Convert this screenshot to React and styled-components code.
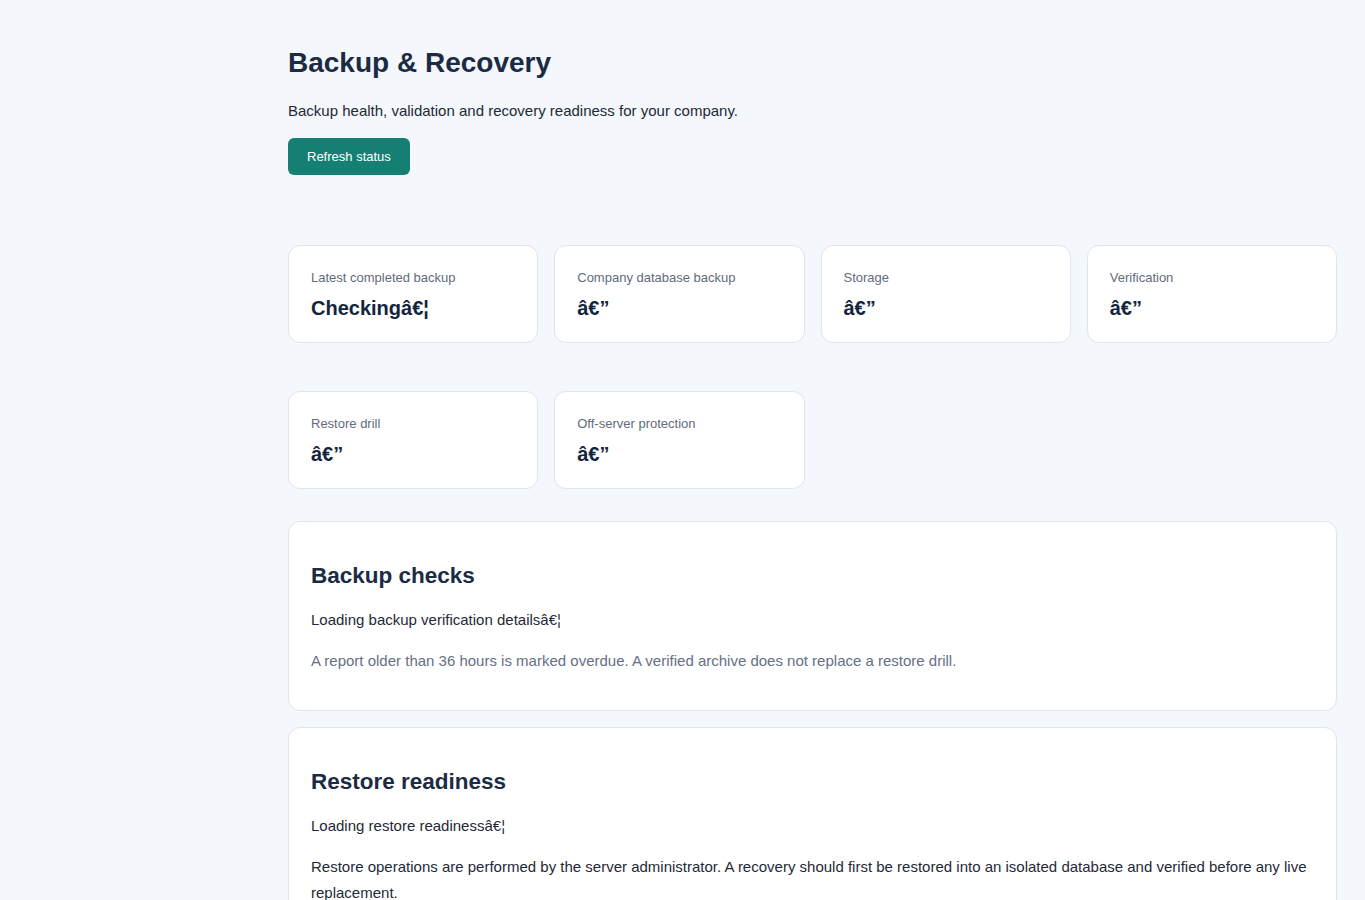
import React from 'react';
import styled, { createGlobalStyle } from 'styled-components';

const GlobalStyle = createGlobalStyle`
  * { box-sizing: border-box; }
  body {
    margin: 0;
    background: #f4f7fb;
    font-family: "Liberation Sans", Arial, sans-serif;
    color: #1f2937;
  }
`;

const Page = styled.div`
  min-height: 100vh;
  padding: 46px 28px 40px 288px;
`;

const Title = styled.h1`
  margin: 0;
  font-size: 28px;
  line-height: 1.2;
  font-weight: 700;
  color: #1b2b43;
`;

const Subtitle = styled.p`
  margin: 18px 0 14px;
  font-size: 15px;
  line-height: 26px;
  color: #1f2937;
`;

const PrimaryButton = styled.button`
  height: 37px;
  padding: 0 19px;
  border: none;
  border-radius: 6px;
  background: #167f74;
  color: #ffffff;
  font-family: inherit;
  font-size: 13px;
  font-weight: 500;
  cursor: pointer;
`;

const StatGrid = styled.div`
  display: grid;
  grid-template-columns: repeat(4, 1fr);
  column-gap: 16px;
  row-gap: 48px;
  margin: 70px 0 32px;
`;

const StatCard = styled.div`
  background: #ffffff;
  border: 1px solid #dfe5ee;
  border-radius: 12px;
  padding: 23px 22px 22px;
`;

const StatLabel = styled.div`
  font-size: 13px;
  line-height: 18px;
  color: #5f6b7c;
  margin-bottom: 9px;
`;

const StatValue = styled.div`
  font-size: 20px;
  line-height: 24px;
  font-weight: 700;
  color: #13253d;
`;

const Sections = styled.div`
  display: flex;
  flex-direction: column;
  gap: 16px;
`;

const Panel = styled.section`
  background: #ffffff;
  border: 1px solid #dfe5ee;
  border-radius: 12px;
  padding: 41px 22px 36px;
`;

const PanelTitle = styled.h2`
  margin: 0 0 18px;
  font-size: 22.5px;
  line-height: 26px;
  font-weight: 700;
  color: #1b2b43;
`;

const PanelText = styled.p`
  margin: 0 0 15px;
  font-size: 15px;
  line-height: 26px;
  color: ${props => (props.muted ? '#667085' : '#1f2937')};

  &:last-child {
    margin-bottom: 0;
  }
`;

const ELLIPSIS = 'â\u20ac\u00a6';
const DASH = 'â\u20ac\u201d';

const stats = [
  { label: 'Latest completed backup', value: `Checking${ELLIPSIS}` },
  { label: 'Company database backup', value: DASH },
  { label: 'Storage', value: DASH },
  { label: 'Verification', value: DASH },
  { label: 'Restore drill', value: DASH },
  { label: 'Off-server protection', value: DASH },
];

function App() {
  return (
    <>
      <GlobalStyle />
      <Page>
        <Title>Backup &amp; Recovery</Title>
        <Subtitle>Backup health, validation and recovery readiness for your company.</Subtitle>
        <PrimaryButton type="button">Refresh status</PrimaryButton>

        <StatGrid>
          {stats.map(stat => (
            <StatCard key={stat.label}>
              <StatLabel>{stat.label}</StatLabel>
              <StatValue>{stat.value}</StatValue>
            </StatCard>
          ))}
        </StatGrid>

        <Sections>
          <Panel>
            <PanelTitle>Backup checks</PanelTitle>
            <PanelText>Loading backup verification details{ELLIPSIS}</PanelText>
            <PanelText muted>
              A report older than 36 hours is marked overdue. A verified archive does not replace a restore drill.
            </PanelText>
          </Panel>
          <Panel>
            <PanelTitle>Restore readiness</PanelTitle>
            <PanelText>Loading restore readiness{ELLIPSIS}</PanelText>
            <PanelText>
              Restore operations are performed by the server administrator. A recovery should first be restored into an isolated database and verified before any live replacement.
            </PanelText>
          </Panel>
        </Sections>
      </Page>
    </>
  );
}

export default App;
